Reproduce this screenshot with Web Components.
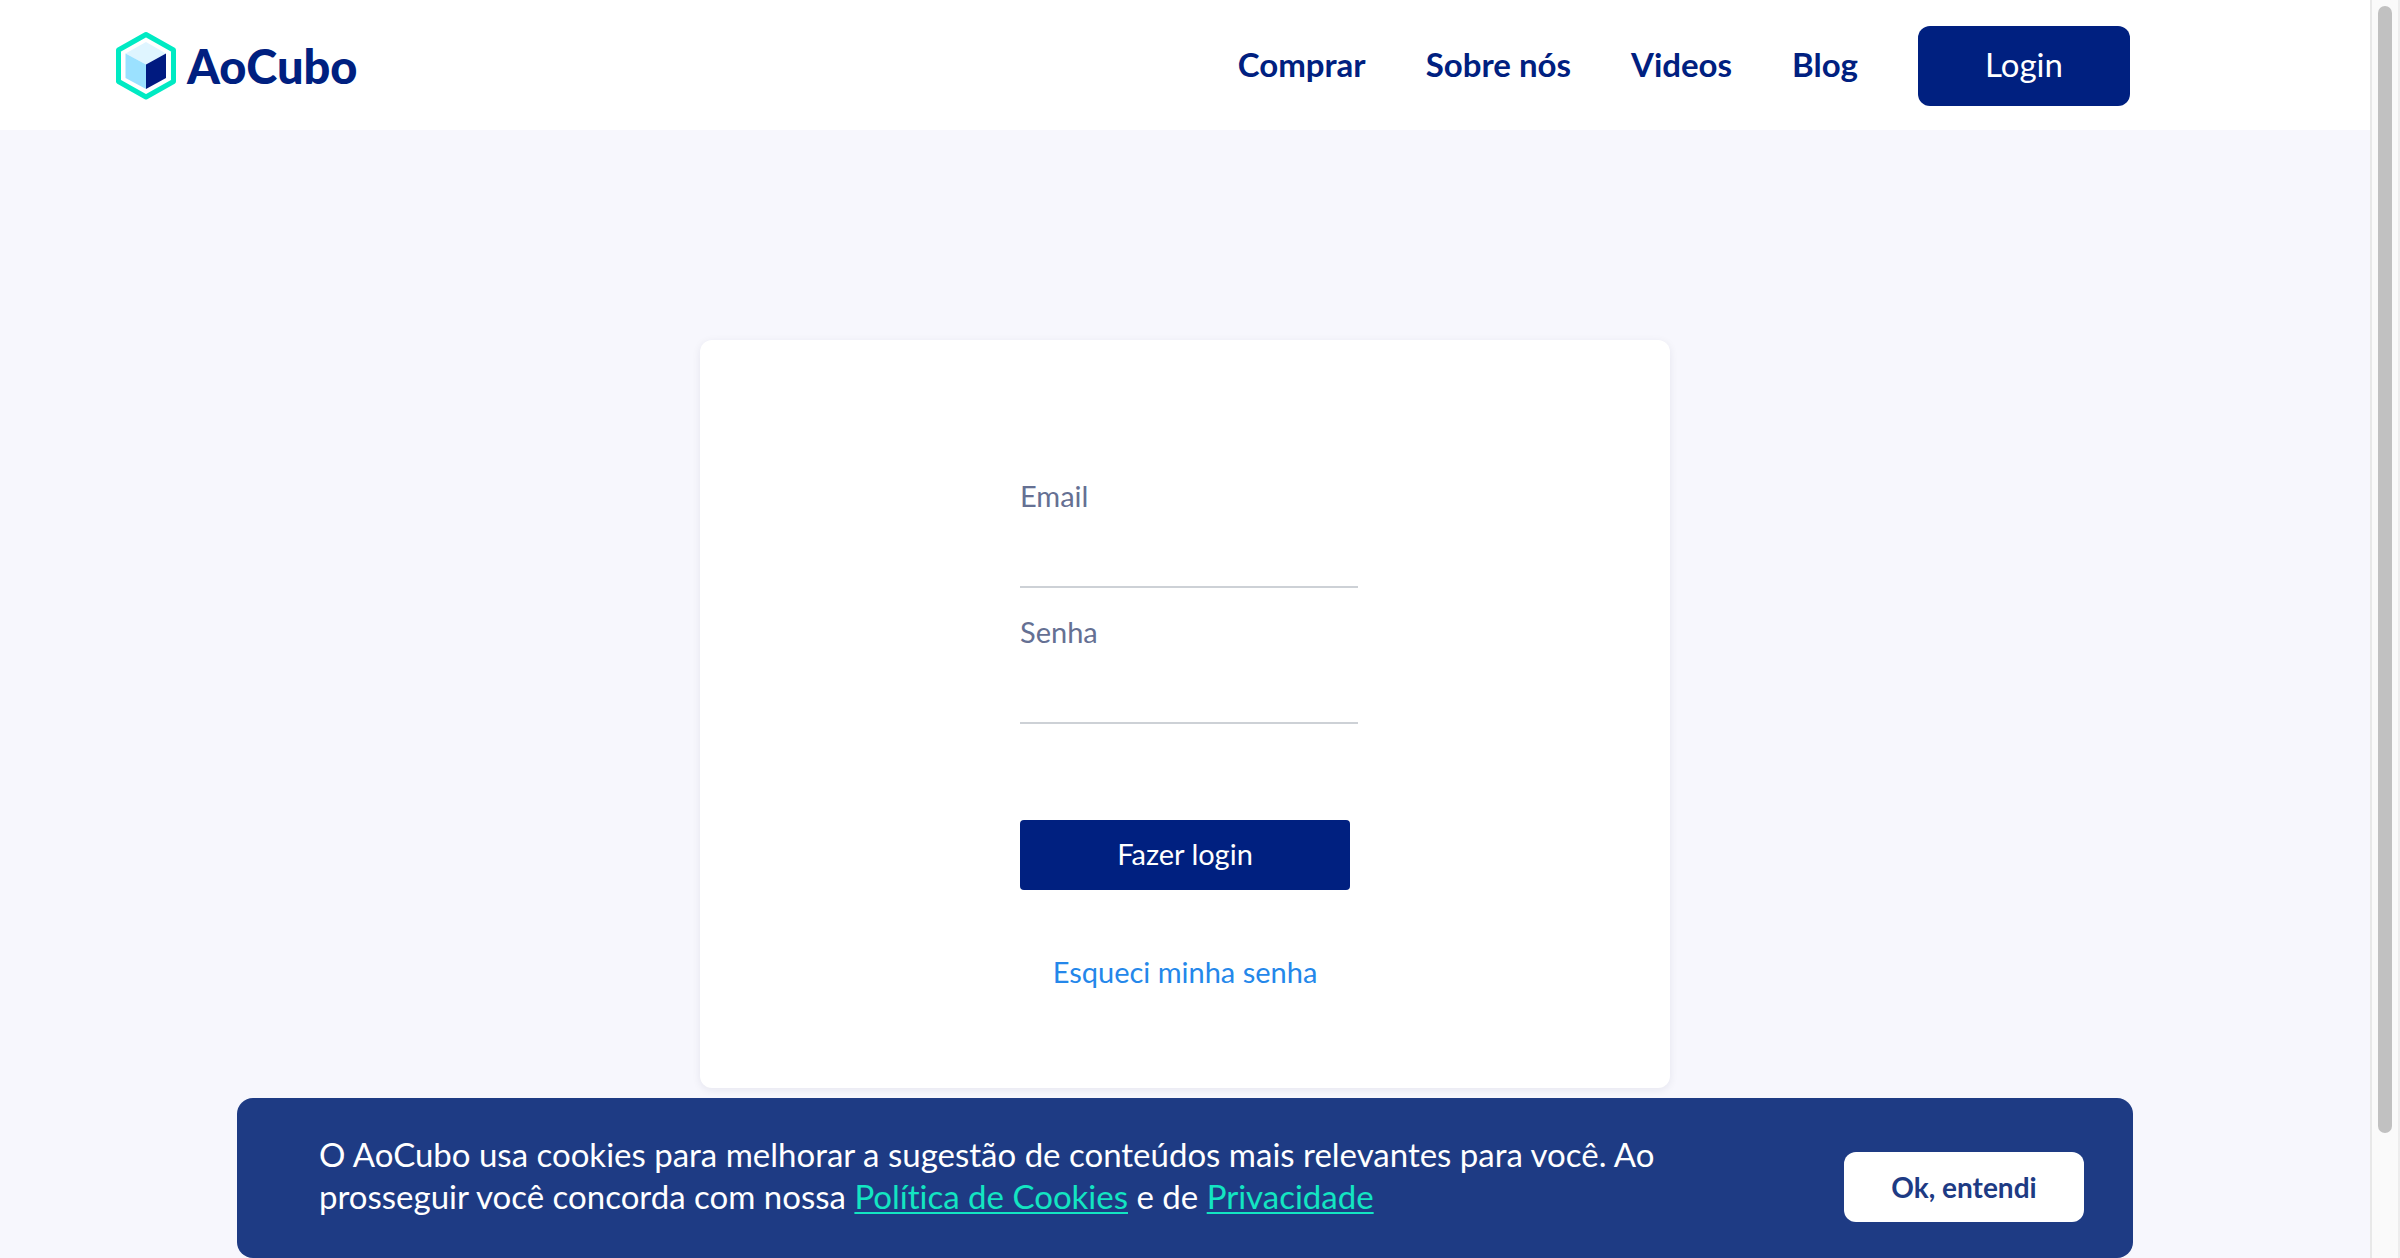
<!DOCTYPE html>
<html lang="pt-BR">
<head>
<meta charset="utf-8">
<meta name="viewport" content="width=device-width, initial-scale=1">
<title>AoCubo - Login</title>
<style>
  :root {
    --navy: #002080;
    --banner: #1e3b84;
    --mint: #13e5c2;
    --page: #f7f7fd;
  }
  html, body { margin: 0; }
  body { font-family: Lato, "Open Sans", sans-serif; font-variant-ligatures: none; background: var(--page); }
</style>
</head>
<body>
<app-shell>
  <site-header slot="header">
    <nav-link href="#comprar">Comprar</nav-link>
    <nav-link href="#sobre">Sobre nós</nav-link>
    <nav-link href="#videos">Videos</nav-link>
    <nav-link href="#blog">Blog</nav-link>
  </site-header>
  <login-card>
    <text-field label="Email" type="email" name="email"></text-field>
    <text-field label="Senha" type="password" name="senha"></text-field>
  </login-card>
  <cookie-banner slot="footer"></cookie-banner>
  <page-scrollbar slot="scrollbar"></page-scrollbar>
</app-shell>

<script>
  const define = (name, html, setup) => {
    const template = document.createElement('template');
    template.innerHTML = html;
    customElements.define(name, class extends HTMLElement {
      constructor() {
        super();
        this.attachShadow({ mode: 'open' }).append(template.content.cloneNode(true));
      }
      connectedCallback() { if (setup) setup(this, this.shadowRoot); }
    });
  };

  define('app-shell', `
    <style>
      :host { display: grid; grid-template-columns: minmax(0, 1fr) 30px; min-height: 100vh; }
      .page { display: flex; flex-direction: column; }
      main { flex: 1; display: flex; justify-content: center; align-items: flex-start; padding: 210px 24px 10px; }
    </style>
    <div class="page">
      <slot name="header"></slot>
      <main><slot></slot></main>
      <slot name="footer"></slot>
    </div>
    <slot name="scrollbar"></slot>`);

  define('brand-logo', `
    <style>
      :host { display: block; }
      a { display: flex; align-items: center; gap: 10px; text-decoration: none; color: var(--navy); }
      svg { display: block; }
      span { font-size: 47px; line-height: 70px; font-weight: 900; }
    </style>
    <a href="#inicio">
      <svg width="62" height="70" viewBox="0 0 62 70" aria-hidden="true">
        <path d="M31 3.500 L58.500 19 V50.500 L31 66 L3.500 50.500 V19 Z" fill="#fff" stroke="#00eac3" stroke-width="5" stroke-linejoin="round"/>
        <path d="M31 11 L51 22.500 L31 33.500 L10.500 22.500 Z" fill="#dff5ff"/>
        <path d="M10.500 22.500 L31 33.500 V58 L10.500 47 Z" fill="#9be1ff"/>
        <path d="M51 22.500 L31 33.500 V58 L51 47 Z" fill="#001a80"/>
      </svg>
      <span>AoCubo</span>
    </a>`);

  define('nav-link', `
    <style>
      :host { display: block; }
      a { font-size: 33px; line-height: 40px; font-weight: 700; color: var(--navy); text-decoration: none; }
    </style>
    <a><slot></slot></a>`,
    (host, root) => { root.querySelector('a').href = host.getAttribute('href'); });

  define('site-header', `
    <style>
      :host { display: block; background: #fff; }
      header { display: flex; align-items: center; justify-content: space-between; height: 130px; padding: 2px 240px 0 115px; box-sizing: border-box; }
      nav { display: flex; align-items: center; gap: 60px; }
      nav ::slotted(*) { padding-bottom: 4px; }
      button { width: 212px; height: 80px; padding: 0 0 4px; border: 0; border-radius: 12px; background: var(--navy); color: #fff; font: 400 33px/40px Lato, "Open Sans", sans-serif; }
    </style>
    <header>
      <brand-logo></brand-logo>
      <nav><slot></slot><button type="button">Login</button></nav>
    </header>`);

  define('text-field', `
    <style>
      :host { display: block; }
      label { display: block; font-size: 29px; line-height: 40px; color: #657093; }
      input { display: block; width: 100%; height: 72px; box-sizing: border-box; padding: 0; border: 0; border-bottom: 2px solid #cdd1d6; background: transparent; font: 400 29px/40px Lato, "Open Sans", sans-serif; outline: 0; }
    </style>
    <label for="field"></label>
    <input id="field">`,
    (host, root) => {
      root.querySelector('label').textContent = host.getAttribute('label');
      const input = root.querySelector('input');
      input.type = host.getAttribute('type');
      input.name = host.getAttribute('name');
    });

  define('login-card', `
    <style>
      :host { display: block; width: 100%; max-width: 970px; }
      form { display: flex; flex-direction: column; align-items: center; box-sizing: border-box; padding: 136px 24px 96px; border-radius: 12px; background: #fff; box-shadow: 0 2px 8px rgba(30, 30, 60, .08); }
      .column { width: 330px; display: flex; flex-direction: column; }
      .fields { width: 338px; display: flex; flex-direction: column; gap: 24px; }
      button { height: 70px; margin: 96px 0 62px; padding: 0 0 2px; border: 0; border-radius: 4px; background: var(--navy); color: #fff; font: 400 29px/40px Lato, "Open Sans", sans-serif; }
      a { align-self: center; font-size: 29px; line-height: 40px; color: #2487ea; text-decoration: none; }
    </style>
    <form>
      <div class="column">
        <div class="fields"><slot></slot></div>
        <button type="button">Fazer login</button>
        <a href="#recuperar">Esqueci minha senha</a>
      </div>
    </form>`);

  define('cookie-banner', `
    <style>
      :host { display: block; width: 80%; margin: 0 auto; }
      section { display: flex; align-items: center; justify-content: space-between; gap: 40px; min-height: 160px; box-sizing: border-box; padding: 18px 49px 0 82px; border-radius: 16px; background: var(--banner); color: #fff; }
      p { flex: 0 1 1360px; margin: 0 0 24px; font-size: 33px; line-height: 42px; }
      a { color: var(--mint); text-decoration: underline; text-decoration-thickness: 2px; text-underline-offset: 3px; text-decoration-skip-ink: none; }
      button { flex: none; width: 240px; height: 70px; border: 0; border-radius: 12px; background: #fff; color: var(--banner); font: 700 28px/40px Lato, "Open Sans", sans-serif; }
    </style>
    <section aria-label="Cookies">
      <p>O AoCubo usa cookies para melhorar a sugestão de conteúdos mais relevantes para você. Ao<br>prosseguir você concorda com nossa <a href="#cookies">Política de Cookies</a> e de <a href="#privacidade">Privacidade</a></p>
      <button type="button">Ok, entendi</button>
    </section>`);

  define('page-scrollbar', `
    <style>
      :host { display: block; box-sizing: border-box; padding: 6px 6px 0; border-left: 2px solid #e8e8e8; border-right: 2px solid #ededed; background: #fafafa; }
      .thumb { height: 90%; border-radius: 8px; background: #c1c1c1; }
    </style>
    <div class="thumb"></div>`);
</script>
</body>
</html>
